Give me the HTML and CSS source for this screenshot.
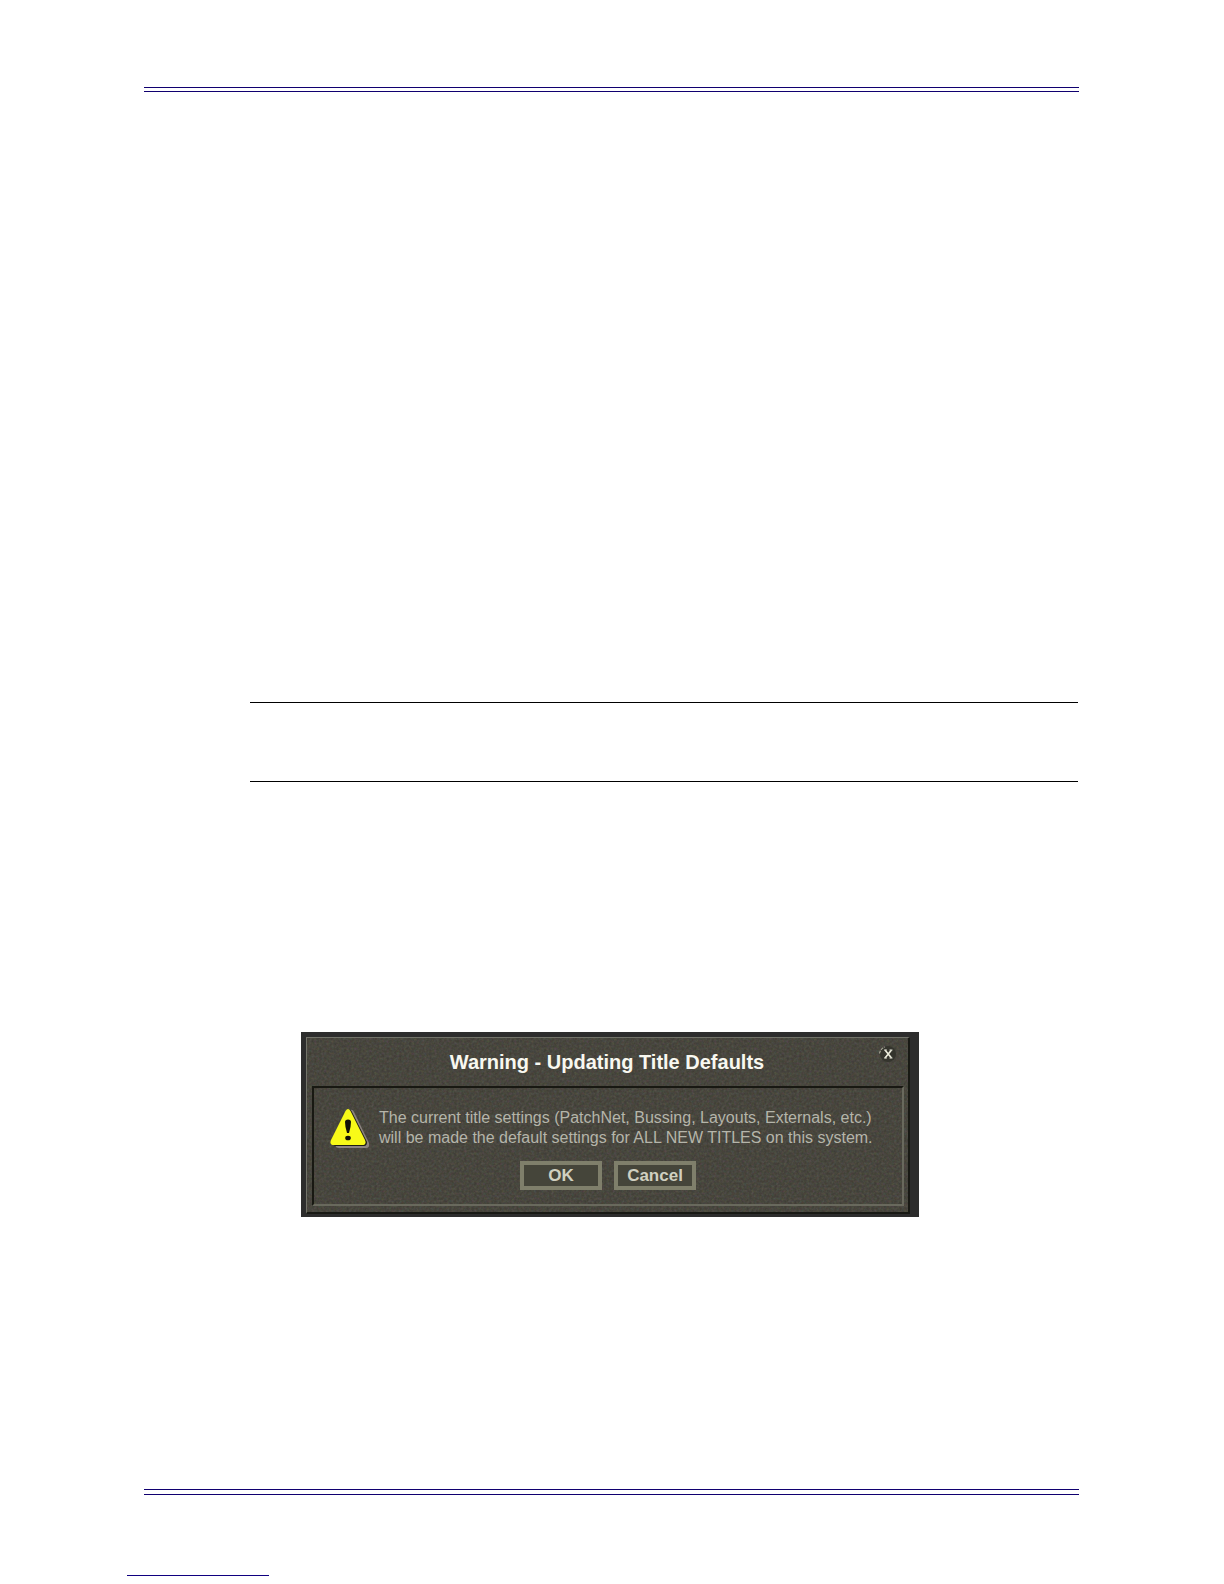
FILE: index.html
```
<!DOCTYPE html>
<html lang="en">
<head>
  <meta charset="UTF-8">
  <title>Updating Title Defaults</title>
  <link rel="stylesheet" href="styles.css">
</head>
<body>
  <div class="page">
    <header class="page-header"></header>

    <main class="content">
      <div class="note"></div>

      <div class="backdrop">
        <section class="dialog" role="dialog" aria-labelledby="dialogTitle" aria-describedby="dialogText">
          <div class="title-bar">
            <h1 id="dialogTitle">Warning - Updating Title Defaults</h1>
            <button class="close-button" type="button" aria-label="Close">
              <svg width="20" height="20" viewBox="0 0 20 20">
                <circle cx="11" cy="10" r="8" fill="#34342d"/>
                <path d="M2.5 9.500 A8 8 0 0 1 8 3" fill="none" stroke="#a5a595" stroke-width="1.200" stroke-dasharray="3 1"/>
                <path d="M8 6 L14.500 14 M14.500 6 L8 14" fill="none" stroke="#eeeede" stroke-width="1.600"/>
                <path d="M7 6 h3 M12.500 6 h3 M7 14 h3 M12.500 14 h3" stroke="#d5d5c8" stroke-width="1"/>
              </svg>
            </button>
          </div>

          <div class="panel">
            <div class="message">
              <svg class="warning-icon" width="42" height="42" viewBox="0 0 42 42">
                <path d="M19 3 Q22 0 24 4 L39 35 Q40 40 36 40 H9 Q5 40 6 37 Z" fill="#8c8480"/>
                <path d="M18 2 Q21 1 22 4 L37 34 Q37 38 34 38 H6 Q3 38 4 35 Z" fill="#1c1c12"/>
                <path d="M15.500 3 Q18 -1 20.500 3 L35 32 Q37 37 32 37 H4 Q-1 37 1 32 Z" fill="#f8fa18"/>
                <path d="M15 14 Q15 11.500 18 11.500 Q21 11.500 21 14 Q21 19 19 25 H17 Q15 19 15 14 Z" fill="#111108"/>
                <ellipse cx="18" cy="30" rx="2.800" ry="2.300" fill="#111108"/>
              </svg>
              <p id="dialogText">The current title settings (PatchNet, Bussing, Layouts, Externals, etc.)<br>
                will be made the default settings for ALL NEW TITLES on this system.</p>
            </div>
            <div class="buttons">
              <button type="button">OK</button>
              <button type="button">Cancel</button>
            </div>
          </div>
        </section>
      </div>
    </main>

    <footer class="page-footer"></footer>
  </div>
  <div class="link-line"></div>
</body>
</html>
```

FILE: styles.css
```
* {
  box-sizing: border-box;
}

body {
  margin: 0;
  background: #fff;
  font-family: "Liberation Sans", Arial, sans-serif;
}

.page {
  padding: 87px 145px 0 144px;
}

/* double rules at the top and bottom of the page */
.page-header,
.page-footer {
  height: 5px;
  border-top: 1px solid #100070;
  border-bottom: 1px solid #100070;
}

.page-footer {
  height: 6px;
}

.content {
  padding: 610px 0 272px;
}

.note {
  height: 80px;
  margin: 0 1px 250px 106px;
  border-top: 1px solid #000;
  border-bottom: 1px solid #000;
}

.backdrop {
  max-width: 618px;
  margin-left: 157px;
  padding: 5px 9px 3px 5px;
  background: #2d2d2d;
}

.dialog {
  padding: 0 4px 6px 5px;
  border: 1px solid #727369;
  border-right: 2px solid #181914;
  border-bottom: 2px solid #181914;
  background-color: #3b3930;
  /* stone grain */
  background-image: url("data:image/svg+xml,%3Csvg xmlns='http://www.w3.org/2000/svg' width='200' height='200'%3E%3Cfilter id='n'%3E%3CfeTurbulence type='fractalNoise' baseFrequency='.4' numOctaves='2' stitchTiles='stitch'/%3E%3C/filter%3E%3Crect width='200' height='200' filter='url(%23n)' opacity='.2'/%3E%3C/svg%3E");
}

.title-bar {
  display: grid;
  grid-template-columns: 20px 1fr 20px;
  align-items: center;
  height: 48px;
  padding: 0 7px 0 5px;
}

.title-bar h1 {
  grid-column: 2;
  margin: 0;
  color: #f8f8f0;
  font-size: 20px;
  line-height: 24px;
  text-align: center;
}

.close-button {
  align-self: start;
  width: 20px;
  height: 20px;
  margin-top: 6px;
  padding: 0;
  border: none;
  background: none;
  cursor: pointer;
}

.close-button svg {
  display: block;
}

.panel {
  padding: 20px 16px 14px;
  border: 2px solid #69695d;
  border-top-color: #181812;
  border-left-color: #181812;
}

.message {
  display: flex;
  gap: 7px;
  margin-bottom: 11px;
}

.warning-icon {
  flex-shrink: 0;
}

.message p {
  margin: 0;
  color: #b5b5aa;
  font-size: 16px;
  line-height: 20px;
}

.buttons {
  display: flex;
  justify-content: center;
  gap: 12px;
}

.buttons button {
  width: 82px;
  height: 29px;
  padding: 0;
  border: 4px solid #7f7f6b;
  background: #45453a;
  color: #d0d0c0;
  font-family: inherit;
  font-size: 17px;
  font-weight: bold;
  line-height: 20px;
  cursor: pointer;
}

.link-line {
  width: 142px;
  margin: 80px 0 8px 127px;
  border-top: 1px solid #100080;
}
```
